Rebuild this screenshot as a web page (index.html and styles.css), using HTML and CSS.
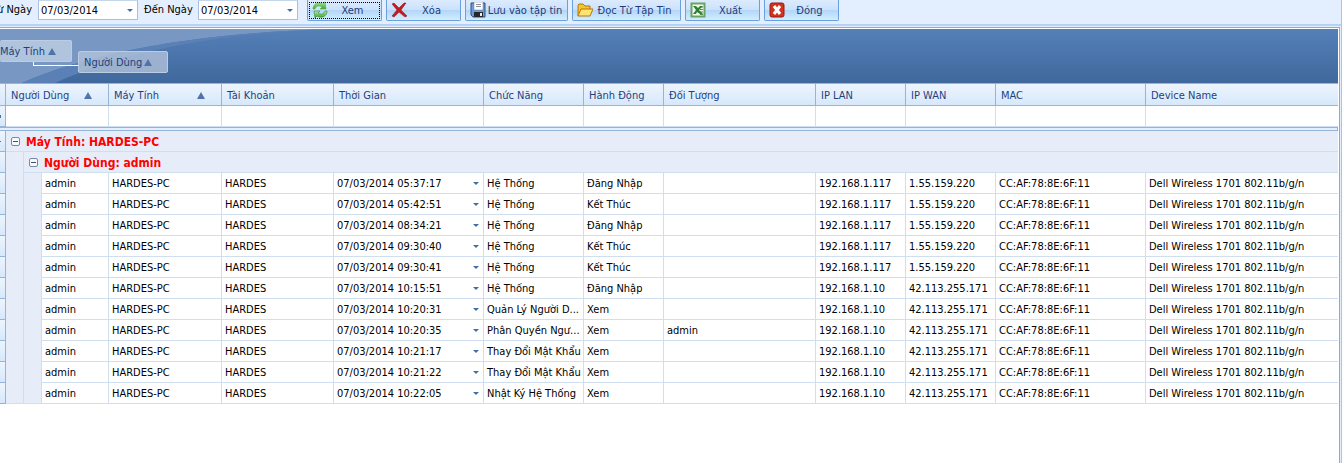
FILE: index.html
```html
<!DOCTYPE html>
<html lang="vi">
<head>
<meta charset="utf-8">
<title>Nhật Ký Hệ Thống</title>
<link rel="stylesheet" href="styles.css">
</head>
<body>
<div class="window">
  <form class="toolbar">
    <label class="lbl first" for="from">Từ Ngày</label>
    <span class="date"><input id="from" type="text" value="07/03/2014"><i class="drop"></i></span>
    <label class="lbl" for="to">Đến Ngày</label>
    <span class="date"><input id="to" type="text" value="07/03/2014"><i class="drop"></i></span>
    <div class="buttons">
      <button type="button" class="btn active"><svg viewBox="0 0 16 16"><defs><linearGradient id="g" x2="0" y2="1"><stop offset="0" stop-color="#b5e89a"/><stop offset="1" stop-color="#35a32d"/></linearGradient></defs><path d="M1 7C1 2 6-1 11 2l2-2 1 7H8l2-2C7 3 4 4 3 7z" fill="url(#g)" stroke="#5db548" stroke-width=".6"/><path d="M15 9c0 5-5 8-10 5l-2 2-1-7h6l-2 2c3 2 6 1 7-2z" fill="url(#g)" stroke="#2c8d2c" stroke-width=".6"/></svg><span>Xem</span></button>
      <button type="button" class="btn"><svg viewBox="0 0 16 16"><path d="M1 2L3 1 8 6l5-5 2 0-5 7 6 6-2 1-6-5-5 5-2-1 5-6z" fill="#c8191c" stroke="#8d1114" stroke-width=".5"/></svg><span>Xóa</span></button>
      <button type="button" class="btn save"><svg viewBox="0 0 16 16"><path d="M1 1h14v14H3l-2-2z" fill="#6f9cd6" stroke="#2d4f86"/><path d="M4 0h9v8H4z" fill="#fff" stroke="#6d7a90" stroke-width=".5"/><path d="M6 2.500h5M6 4.500h5" stroke="#8c9097"/><path d="M4 10h9v5H4z" fill="#26282c"/><path d="M10 11h2v3h-2z" fill="#e8edf5"/></svg><span>Lưu vào tập tin</span></button>
      <button type="button" class="btn open"><svg viewBox="0 0 16 16"><path d="M1 14V3l1-1h4l2 2h5v3" fill="#f4c52c" stroke="#b27b0c"/><path d="M1 14L4 7h12l-3 7z" fill="#ffe372" stroke="#b27b0c"/></svg><span>Đọc Từ Tập Tin</span></button>
      <button type="button" class="btn"><svg viewBox="0 0 16 16"><path d="M1.500 1.500h13v13h-13z" fill="#f4faf2" stroke="#6aa363" stroke-width="2"/><path d="M10 5h3M10 7.500h3M10 10h3M10 12.500h3" stroke="#4c9248"/><path d="M3 4h3l2 2 2-2h3L9 8l4 4h-3l-3-2-1 2H3l3-4z" fill="#2f8132"/></svg><span>Xuất</span></button>
      <button type="button" class="btn"><svg viewBox="0 0 16 16"><rect x="1" y="1" width="14" height="14" rx="2" fill="#d3321f" stroke="#951c12"/><path d="M5 4l6 8M11 4l-6 8" stroke="#fff" stroke-width="3"/></svg><span>Đóng</span></button>
    </div>
  </form>
  <main class="grid">
    <section class="groups">
      <svg class="swoosh" viewBox="0 0 1338 54" preserveAspectRatio="xMinYMin slice"><path d="M0 0H330C200 4 95 22 22 54H0z" fill="#7898c3"/><path d="M330 0C200 4 95 22 22 54h33C125 22 215 5 330 0z" fill="#5a80b5"/></svg>
      <span class="chip c1">Máy Tính <i class="up"></i></span><span class="link"></span><span class="chip c2">Người Dùng <i class="up"></i></span>
    </section>
    <table>
      <colgroup><col class="w6"><col class="w18"><col class="w18"><col class="w67"><col class="w113"><col class="w112"><col class="w150"><col class="w100"><col class="w80"><col class="w152"><col class="w90"><col class="w90"><col class="w150"><col></colgroup>
      <thead>
        <tr class="head"><th></th><th colspan="3"><div>Người Dùng <i class="up"></i></div></th><th><div>Máy Tính <i class="up"></i></div></th><th>Tài Khoản</th><th>Thời Gian</th><th>Chức Năng</th><th>Hành Động</th><th>Đối Tượng</th><th>IP LAN</th><th>IP WAN</th><th>MAC</th><th>Device Name</th></tr>
        <tr class="filter"><td class="ind"><i class="mark dot"></i></td><td colspan="3"></td><td></td><td></td><td></td><td></td><td></td><td></td><td></td><td></td><td></td><td></td></tr>
        <tr class="split"><td colspan="14"></td></tr>
      </thead>
      <tbody id="rows">
        <tr class="group"><td class="ind"><i class="mark"></i></td><td colspan="13"><button type="button" class="toggle" aria-label="Thu gọn"></button>Máy Tính: HARDES-PC</td></tr>
        <tr class="group"><td class="ind"></td><td class="pad"></td><td colspan="12"><button type="button" class="toggle" aria-label="Thu gọn"></button>Người Dùng: admin</td></tr>
      </tbody>
    </table>
  </main>
</div>
<script src="rows.js"></script>
</body>
</html>
```
FILE: styles.css
```css
* { box-sizing: border-box; }
body { margin: 0; background: #e3efff; font-family: "DejaVu Sans Condensed", "DejaVu Sans", sans-serif; font-size: 11px; color: #000; overflow: hidden; }
button, input { font: inherit; color: inherit; }
.window { display: flex; flex-direction: column; min-height: 100vh; border-right: 1px solid #a9c4e8; }
.toolbar { display: flex; height: 27px; align-items: flex-start; border-bottom: 1px solid #e3efff; box-shadow: inset 0 -2px #b4d1f8; white-space: nowrap; }
.lbl { width: 54px; line-height: 20px; }
.lbl.first { width: 38px; display: flex; justify-content: flex-end; padding-right: 6px; overflow: hidden; }
.date { display: flex; align-items: center; width: 100px; height: 20px; background: #fff; border: 1px solid #a9bfdf; border-top-color: #c5d5ea; margin-right: 6px; padding-right: 4px; }
.date input { border: 0; padding: 0 0 0 2px; width: 100%; min-width: 0; background: none; outline: 0; }
.drop { flex: none; border: 3px solid transparent; border-top-color: #3f6dac; border-bottom: 0; }
.buttons { display: flex; gap: 4px; margin-left: 3px; }
.btn { display: flex; align-items: center; width: 75px; height: 21px; padding: 0 4px; border: 1px solid #6a9fe0; border-top: 0; border-radius: 0 0 2px 2px; background: linear-gradient(#dcebfd, #cbe2fb 48%, #b3d5f8 52%, #d2eefe); color: #1e3c7b; }
.btn svg { width: 16px; height: 16px; flex: none; }
.btn span { flex: 1; text-align: center; }
.active { outline: 1px dotted #000; outline-offset: -3px; }
.save { width: 103px; padding-right: 3px; }
.open { width: 109px; }
.grid { flex: 1; margin-right: 1px; border: solid #8aaad4; border-width: 1px 1px 0 0; background: #fff; padding: 1px 1px 0 0; }
.groups { position: relative; display: flex; align-items: flex-start; height: 54px; overflow: hidden; background: linear-gradient(#5480b8, #40689c); }
.swoosh { position: absolute; inset: 0; width: 1338px; height: 54px; }
.chip { position: relative; display: flex; align-items: center; gap: 5px; height: 22px; padding: 0 5px; background: #c8d5e8b8; border: 1px solid #bccce2; border-radius: 2px; color: #1c3f7c; white-space: nowrap; }
.c1 { width: 72px; margin-top: 11px; padding-left: 0; border-left: 0; gap: 3px; }
.c2 { width: 90px; margin-top: 22px; margin-left: 6px; gap: 2px; background: #b4c3dac8; }
.link { position: absolute; left: 33px; top: 33px; width: 45px; height: 4px; border: solid #fff; border-width: 0 0 1px 1px; }
.up { flex: none; border: 4px solid transparent; border-bottom: 7px solid #4f74a9; border-top: 0; }
table { width: 100%; table-layout: fixed; border-collapse: separate; border-spacing: 0; }
.w6 { width: 6px; } .w18 { width: 18px; } .w67 { width: 67px; } .w80 { width: 80px; } .w90 { width: 90px; } .w100 { width: 100px; } .w112 { width: 112px; } .w113 { width: 113px; } .w150 { width: 150px; } .w152 { width: 152px; }
td, th { padding: 0 0 0 3px; overflow: hidden; white-space: nowrap; text-overflow: ellipsis; text-align: left; font-weight: normal; }
td { height: 21px; border: solid #d0dff0; border-width: 0 1px 1px 0; }
td:last-child, th:last-child { border-right: 0; }
.head th { height: 23px; padding: 1px 5px 0; border: solid #94b4da; border-width: 1px 1px 1px 0; background: linear-gradient(#edf5fe, #d7e8fb); color: #1e3f80; }
.head th:last-child { border-right: 0; }
.head div { display: flex; align-items: center; justify-content: space-between; padding-right: 11px; }
td.ind { padding: 0; border-color: #94b4da; background: linear-gradient(#edf5fe, #d7e8fb); }
.mark { display: block; width: 1px; height: 1px; background: #4f6f9f; }
.dot { height: 3px; }
.split td { height: 4px; padding: 0; background: #e3efff; border: 1px solid #94b4da; border-left: 0; }
.split td:last-child { border-right: 1px solid #94b4da; }
.group td:not(.ind), .pad { background: #e7edf8; }
.group td { font-weight: bold; font-size: 12px; color: #f00; }
.group td:last-child { padding: 1px 0 0 5px; }
td.pad { padding: 0; border-bottom: 0; }
tr:last-child .pad { border-bottom: 1px solid #d0dff0; }
.toggle { position: relative; width: 9px; height: 9px; padding: 0; margin-right: 6px; border: 1px solid #7687a8; border-radius: 2px; background: #f6f9fd; vertical-align: 1px; }
.toggle::after { content: ""; position: absolute; left: 1px; top: 3px; width: 5px; height: 1px; background: #40506e; }
.time { display: flex; align-items: center; justify-content: space-between; padding-right: 4px; }
```
FILE: rows.js
```js
const log = [
  ["05:37:17", "Hệ Thống", "Đăng Nhập", ""],
  ["05:42:51", "Hệ Thống", "Kết Thúc", ""],
  ["08:34:21", "Hệ Thống", "Đăng Nhập", ""],
  ["09:30:40", "Hệ Thống", "Kết Thúc", ""],
  ["09:30:41", "Hệ Thống", "Kết Thúc", ""],
  ["10:15:51", "Hệ Thống", "Đăng Nhập", ""],
  ["10:20:31", "Quản Lý Người D...", "Xem", ""],
  ["10:20:35", "Phân Quyền Ngư...", "Xem", "admin"],
  ["10:21:17", "Thay Đổi Mật Khẩu", "Xem", ""],
  ["10:21:22", "Thay Đổi Mật Khẩu", "Xem", ""],
  ["10:22:05", "Nhật Ký Hệ Thống", "Xem", ""]
];
const body = document.getElementById("rows");
log.forEach(([time, feature, action, target], i) => {
  const lan = i < 5 ? "192.168.1.117" : "192.168.1.10";
  const wan = i < 5 ? "1.55.159.220" : "42.113.255.171";
  const stamp = `<div class="time">07/03/2014 ${time}<i class="drop"></i></div>`;
  const cells = ["admin", "HARDES-PC", "HARDES", stamp, feature, action, target, lan, wan, "CC:AF:78:8E:6F:11", "Dell Wireless 1701 802.11b/g/n"];
  body.insertAdjacentHTML("beforeend", `<tr><td class="ind"></td><td class="pad"></td><td class="pad"></td>${cells.map(c => `<td>${c}</td>`).join("")}</tr>`);
});
```
